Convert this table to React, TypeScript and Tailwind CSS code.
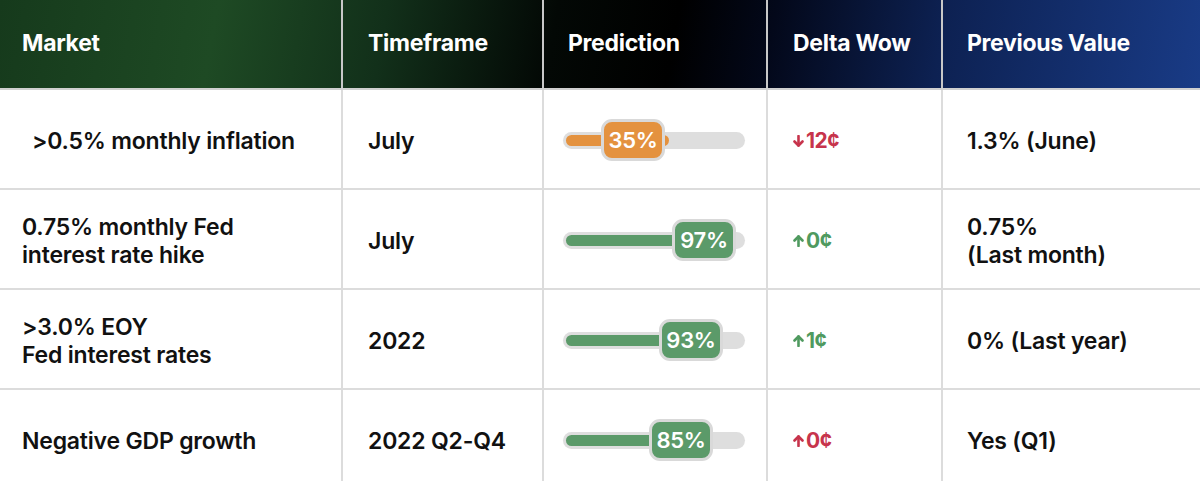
import React from "react";

type Row = {
  market: string[];
  indent?: boolean;
  timeframe: string;
  pct: number;
  pillLeft: number;
  fillW: number;
  tone: "orange" | "green";
  delta: string;
  up: boolean;
  deltaTone: "red" | "green";
  prev: string[];
};

const rows: Row[] = [
  { market: [">0.5% monthly inflation"], indent: true, timeframe: "July", pct: 35, pillLeft: 38, fillW: 103, tone: "orange", delta: "12¢", up: false, deltaTone: "red", prev: ["1.3% (June)"] },
  { market: ["0.75% monthly Fed", "interest rate hike"], timeframe: "July", pct: 97, pillLeft: 109, fillW: 140, tone: "green", delta: "0¢", up: true, deltaTone: "green", prev: ["0.75%", "(Last month)"] },
  { market: [">3.0% EOY", "Fed interest rates"], timeframe: "2022", pct: 93, pillLeft: 96, fillW: 126, tone: "green", delta: "1¢", up: true, deltaTone: "green", prev: ["0% (Last year)"] },
  { market: ["Negative GDP growth"], timeframe: "2022 Q2-Q4", pct: 85, pillLeft: 86, fillW: 116, tone: "green", delta: "0¢", up: true, deltaTone: "red", prev: ["Yes (Q1)"] },
];

const cols = "grid grid-cols-[343px_201px_224px_175px_1fr]";

function Arrow({ up }: { up: boolean }) {
  return (
    <svg width="11" height="12" viewBox="0 0 11 12" fill="none" stroke="currentColor" strokeWidth="2.6" strokeLinecap="round" strokeLinejoin="round">
      {up ? (
        <>
          <path d="M5.5 11V1.5" />
          <path d="M1.5 5.5L5.5 1.5L9.5 5.5" />
        </>
      ) : (
        <>
          <path d="M5.5 1V10.5" />
          <path d="M1.5 6.5L5.5 10.5L9.5 6.5" />
        </>
      )}
    </svg>
  );
}

function Slider({ r }: { r: Row }) {
  const fill = r.tone === "orange" ? "bg-[#e4923f]" : "bg-[#5b9a69]";
  return (
    <div className="relative w-[182px] h-[17px] rounded-full bg-[#dedede]">
      <div className={`absolute left-[3px] top-[3px] h-[11px] rounded-full ${fill}`} style={{ width: r.fillW }} />
      <div
        className={`absolute top-1/2 -translate-y-1/2 w-[64px] h-[42px] rounded-[11px] border-[3px] border-[#d9d9d9] ${fill} flex items-center justify-center text-white text-[22px] font-semibold tracking-[-0.3px]`}
        style={{ left: r.pillLeft }}
      >
        {r.pct}%
      </div>
    </div>
  );
}

export default function App() {
  return (
    <div className="w-[1200px] h-[481px] overflow-hidden bg-white text-[#111] font-['Inter',sans-serif]">
      <div className={`${cols} h-[90px] border-b-2 border-[#d0d0d0] text-white text-[23px] font-bold tracking-[-0.3px] bg-[linear-gradient(100deg,#163a1c_0%,#1e4a24_18%,#12301a_32%,#030805_46%,#000000_56%,#03081a_64%,#0d2152_78%,#193b86_100%)]`}>
        <div className="flex items-center pl-[22px] pb-[2px] border-r-2 border-[#c8c8c8]">Market</div>
        <div className="flex items-center pl-[25px] pb-[2px] border-r-2 border-[#c8c8c8]">Timeframe</div>
        <div className="flex items-center pl-[24px] pb-[2px] border-r-2 border-[#c8c8c8]">Prediction</div>
        <div className="flex items-center pl-[25px] pb-[2px] border-r-2 border-[#c8c8c8]">Delta Wow</div>
        <div className="flex items-center pl-[24px] pb-[2px]">Previous Value</div>
      </div>
      {rows.map((r, i) => (
        <div key={i} className={`${cols} h-[100px] border-b-2 border-[#dcdcdc] text-[23px] font-semibold leading-[28px] tracking-[-0.2px]`}>
          <div className={`flex flex-col justify-center pt-[3px] border-r-2 border-[#dcdcdc] ${r.indent ? "pl-[32px]" : "pl-[22px]"}`}>
            {r.market.map((t) => (
              <span key={t}>{t}</span>
            ))}
          </div>
          <div className="flex items-center pt-[3px] pl-[25px] border-r-2 border-[#dcdcdc]">{r.timeframe}</div>
          <div className="flex items-center pt-[2px] pl-[19px] border-r-2 border-[#dcdcdc]">
            <Slider r={r} />
          </div>
          <div className={`flex items-center pt-[3px] gap-[2px] pl-[25px] border-r-2 border-[#dcdcdc] text-[21px] font-bold tracking-[-0.5px] ${r.deltaTone === "red" ? "text-[#c7344c]" : "text-[#4f9a5f]"}`}>
            <Arrow up={r.up} />
            <span>{r.delta}</span>
          </div>
          <div className="flex flex-col justify-center pt-[3px] pl-[24px]">
            {r.prev.map((t) => (
              <span key={t}>{t}</span>
            ))}
          </div>
        </div>
      ))}
    </div>
  );
}
